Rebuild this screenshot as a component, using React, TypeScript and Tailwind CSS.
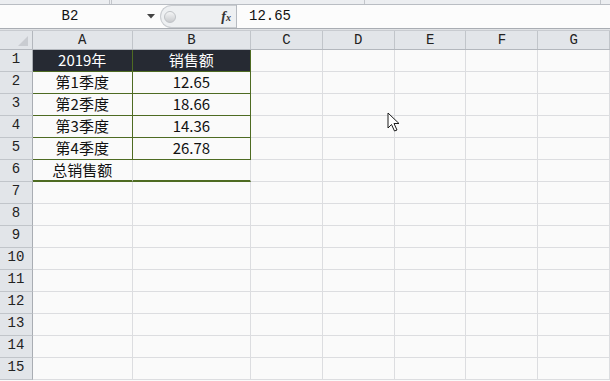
import React from "react";

const cols = ["A", "B", "C", "D", "E", "F", "G"];
const widths = [100, 119, 72, 72, 72, 72, 72];

type Cell = { text?: string; dark?: boolean };

const data: Cell[][] = [
  [{ text: "2019年", dark: true }, { text: "销售额", dark: true }],
  [{ text: "第1季度" }, { text: "12.65" }],
  [{ text: "第2季度" }, { text: "18.66" }],
  [{ text: "第3季度" }, { text: "14.36" }],
  [{ text: "第4季度" }, { text: "26.78" }],
  [{ text: "总销售额" }, { text: "" }],
];

const mono = { fontFamily: '"Liberation Mono", "DejaVu Sans Mono", monospace' };
const cjk = { fontFamily: '"Noto Sans CJK SC", "Noto Sans", sans-serif' };

function Cursor() {
  return (
    <svg
      className="absolute left-[387px] top-[112px]"
      width="14"
      height="22"
      viewBox="0 0 14 22"
    >
      <path
        d="M1 1 L1 16 L4.5 12.5 L7.5 19 L10 18 L7 11.5 L12 11.5 Z"
        fill="#ffffff"
        stroke="#1a1a1a"
        strokeWidth="1"
        strokeLinejoin="miter"
      />
    </svg>
  );
}

export default function App() {
  const rows = Array.from({ length: 15 }, (_, i) => i + 1);
  return (
    <div className="relative w-[610px] h-[381px] overflow-hidden bg-[#fafafa]" style={cjk}>
      {/* top strip */}
      <div className="flex h-[5px] bg-[#eceef1] border-b border-[#b9bdc3]">
        <div className="w-[110px] border-r border-[#c3c6cb]" />
        <div className="w-[2px] border-r border-[#c3c6cb]" />
        <div className="w-[253px] border-r border-[#c3c6cb]" />
        <div className="w-[236px] border-r border-[#c3c6cb]" />
        <div className="flex-1" />
      </div>
      {/* formula bar */}
      <div className="flex h-[24px] bg-[#fcfcfc] border-b border-[#a9adb3]">
        <div className="w-[160px] flex items-center relative">
          <span className="w-[140px] text-center text-[14px] text-[#111]" style={mono}>
            B2
          </span>
          <svg width="8" height="5" viewBox="0 0 8 5" className="ml-[7px]">
            <path d="M0 0 L8 0 L4 4.5 Z" fill="#444" />
          </svg>
        </div>
        <div className="w-[76px] flex items-center bg-[#eef0f2] rounded-l-full border-l border-y border-[#c9ccd0] relative">
          <div className="w-[12px] h-[12px] ml-[3px] rounded-full bg-gradient-to-b from-[#f4f5f6] to-[#c9cbce] border border-[#bfc2c6]" />
          <div className="flex-1" />
          <span
            className="mr-[5px] text-[14px] italic font-bold text-[#333]"
            style={{ fontFamily: '"Liberation Serif", serif' }}
          >
            f<span className="text-[10px]">x</span>
          </span>
        </div>
        <div className="flex-1 flex items-center border-l border-[#b6bac0] bg-[#fcfcfc] pl-[12px]">
          <span className="text-[14px] text-[#111]" style={mono}>
            12.65
          </span>
        </div>
      </div>
      <div className="h-[2px] bg-[#e1e3e6] border-b border-[#c8cbd0]" />
      {/* column header */}
      <div className="flex h-[19px] bg-[#e2e5e9] border-b border-[#b3b7bd]">
        <div className="w-[33px] h-full border-r border-[#b3b7bd] relative">
          <svg width="10" height="10" viewBox="0 0 10 10" className="absolute right-[4px] bottom-[3px]">
            <path d="M10 0 L10 10 L0 10 Z" fill="#c9ccd1" />
          </svg>
        </div>
        {cols.map((c, i) => (
          <div
            key={c}
            className="h-full flex items-center justify-center border-r border-[#c1c5ca] text-[14px] text-[#222]"
            style={{ width: widths[i], ...mono }}
          >
            {c}
          </div>
        ))}
      </div>
      {/* rows */}
      {rows.map((r) => {
        const rowData = data[r - 1];
        return (
          <div key={r} className="flex h-[22px]">
            <div
              className="w-[33px] h-full bg-[#e2e5e9] border-r border-b border-r-[#a9adb3] border-b-[#c1c5ca] flex items-end justify-center pb-[1px] text-[14px] text-[#222]"
              style={mono}
            >
              {r}
            </div>
            {cols.map((c, i) => {
              const cell = rowData ? rowData[i] : undefined;
              const inTable = !!rowData && i < 2;
              const green = "#4e6b22";
              let borderB = "1px solid #dcdde0";
              let borderR = "1px solid #dcdde0";
              if (inTable) {
                if (r <= 5) {
                  borderB = `1px solid ${green}`;
                  borderR = `1px solid ${green}`;
                } else {
                  borderB = `2px solid ${green}`;
                }
              }
              return (
                <div
                  key={c}
                  className={`h-full flex items-center justify-center text-[15px] ${
                    cell?.dark ? "bg-[#262a33] text-white" : "text-[#111]"
                  }`}
                  style={{ width: widths[i], borderBottom: borderB, borderRight: borderR }}
                >
                  {cell?.text}
                </div>
              );
            })}
          </div>
        );
      })}
      <Cursor />
    </div>
  );
}
